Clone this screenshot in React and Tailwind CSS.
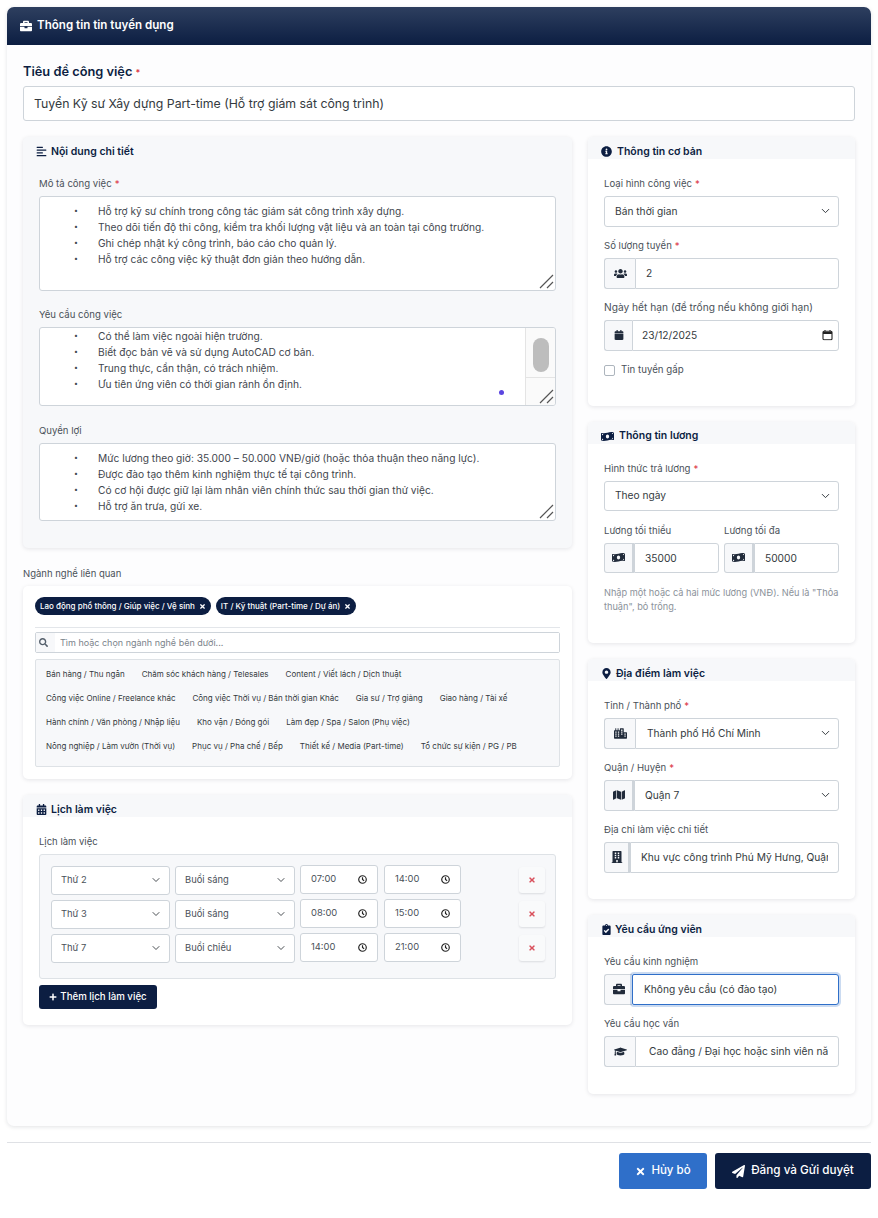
import React from 'react';
import {
  FaBriefcase, FaAlignLeft, FaInfoCircle, FaUsers, FaCalendar, FaCalendarAlt, FaMoneyBillWave,
  FaMapMarkerAlt, FaCity, FaMap, FaBuilding, FaClipboardCheck, FaGraduationCap, FaPaperPlane,
  FaTimes, FaPlus, FaSearch,
} from 'react-icons/fa';
import { ChevronDown } from 'lucide-react';

const BORDER = 'border border-[#ced4da]';

function Req() {
  return <span className="text-[#dc3545] ml-[3px]">*</span>;
}

function Label({ children, required, className = '' }) {
  return (
    <label className={`block h-[13px] leading-[13px] mb-[6px] text-[9.6px] text-[#4a5159] ${className}`}>
      {children}
      {required && <Req />}
    </label>
  );
}

function Chevron() {
  return <ChevronDown size={13} strokeWidth={1.8} className="absolute right-[7px] top-1/2 -translate-y-1/2 text-[#343a40] pointer-events-none" />;
}

function Select({ value, className = '' }) {
  return (
    <div className={`relative h-[30.5px] ${className}`}>
      <select
        defaultValue={value}
        className={`w-full h-full appearance-none bg-white rounded-[3px] ${BORDER} pl-[10px] pr-6 text-[10.2px] text-[#343a40] outline-none`}
      >
        <option>{value}</option>
      </select>
      <Chevron />
    </div>
  );
}

function Group({ icon: Icon, iconSize = 13, addon = 'w-[31px]', value, select, text = 'pl-[10px]', focus, heavy, trailing }) {
  return (
    <div className="flex h-[30.5px]">
      <span className={`${addon} shrink-0 flex items-center justify-center bg-[#f7f8fa] ${BORDER} ${heavy ? 'border-r-2' : 'border-r-0'} rounded-l-[3px] text-[#212b3b]`}>
        <Icon size={iconSize} />
      </span>
      <div className="relative flex-1 min-w-0">
        {select ? (
          <select defaultValue={value} className={`w-full h-full appearance-none bg-white rounded-r-[3px] ${BORDER} ${text} pr-6 text-[10.2px] text-[#343a40] outline-none`}>
            <option>{value}</option>
          </select>
        ) : (
          <input
            defaultValue={value}
            className={`w-full h-full bg-white rounded-r-[3px] border ${focus ? 'border-[#2f6fc9] shadow-[0_0_0_2px_rgba(47,111,201,0.25)] rounded-l-[2px]' : 'border-[#ced4da]'} ${text} pr-[10px] text-[10.2px] text-[#343a40] outline-none`}
          />
        )}
        {select && <Chevron />}
        {trailing}
      </div>
    </div>
  );
}

function Section({ icon: Icon, title, children, gray, className = '', iconSize = 11, gap = 'gap-[5px]' }) {
  return (
    <section className={`rounded-[5px] shadow-[0_1px_4px_rgba(15,23,42,0.1)] ${gray ? 'bg-[#f7f8fa]' : 'bg-white'} ${className}`}>
      <div className={`flex items-center ${gap} h-[22px] pl-[13px] pt-[7px] bg-[#f7f8fa] rounded-t-[5px] text-[10.5px] font-semibold text-[#0c1e42]`}>
        <Icon size={iconSize} />
        <span>{title}</span>
      </div>
      {children}
    </section>
  );
}

function Grip() {
  return (
    <svg className="absolute right-[1px] bottom-[1px]" width="15" height="15" viewBox="0 0 15 15" fill="none" stroke="#555" strokeWidth="1.2">
      <path d="M1 14 14 1M8 14l6-6" />
    </svg>
  );
}

function RichText({ lines, height, top = 'pt-[6px]', children }) {
  return (
    <div className={`relative ${height} bg-white rounded-[3px] ${BORDER} overflow-hidden`}>
      <ul className={`${top} text-[10.2px] leading-[16px] text-[#3f464e]`}>
        {lines.map((line) => (
          <li key={line} className="flex">
            <span className="w-[58px] shrink-0 text-right pr-[20px] text-[7px]">•</span>
            <span>{line}</span>
          </li>
        ))}
      </ul>
      {children}
      <Grip />
    </div>
  );
}

const describeLines = [
  'Hỗ trợ kỹ sư chính trong công tác giám sát công trình xây dựng.',
  'Theo dõi tiến độ thi công, kiểm tra khối lượng vật liệu và an toàn tại công trường.',
  'Ghi chép nhật ký công trình, báo cáo cho quản lý.',
  'Hỗ trợ các công việc kỹ thuật đơn giản theo hướng dẫn.',
];
const requireLines = [
  'Có thể làm việc ngoài hiện trường.',
  'Biết đọc bản vẽ và sử dụng AutoCAD cơ bản.',
  'Trung thực, cẩn thận, có trách nhiệm.',
  'Ưu tiên ứng viên có thời gian rảnh ổn định.',
];
const benefitLines = [
  'Mức lương theo giờ: 35.000 – 50.000 VNĐ/giờ (hoặc thỏa thuận theo năng lực).',
  'Được đào tạo thêm kinh nghiệm thực tế tại công trình.',
  'Có cơ hội được giữ lại làm nhân viên chính thức sau thời gian thử việc.',
  'Hỗ trợ ăn trưa, gửi xe.',
];
const categories = [
  ['Bán hàng / Thu ngân', 'Chăm sóc khách hàng / Telesales', 'Content / Viết lách / Dịch thuật'],
  ['Công việc Online / Freelance khác', 'Công việc Thời vụ / Bán thời gian Khác', 'Gia sư / Trợ giảng', 'Giao hàng / Tài xế'],
  ['Hành chính / Văn phòng / Nhập liệu', 'Kho vận / Đóng gói', 'Làm đẹp / Spa / Salon (Phụ việc)'],
  ['Nông nghiệp / Làm vườn (Thời vụ)', 'Phục vụ / Pha chế / Bếp', 'Thiết kế / Media (Part-time)', 'Tổ chức sự kiện / PG / PB'],
];
const schedule = [
  ['Thứ 2', 'Buổi sáng', '07:00', '14:00'],
  ['Thứ 3', 'Buổi sáng', '08:00', '15:00'],
  ['Thứ 7', 'Buổi chiều', '14:00', '21:00'],
];

function SmallSelect({ value, width }) {
  return (
    <div className={`relative h-full ${width}`}>
      <select defaultValue={value} className={`w-full h-full appearance-none bg-white rounded-[3px] ${BORDER} pl-[9px] text-[9.4px] text-[#4a5159] outline-none`}>
        <option>{value}</option>
      </select>
      <ChevronDown size={12} strokeWidth={1.8} className="absolute right-[8px] top-1/2 -translate-y-1/2 text-[#343a40] pointer-events-none" />
    </div>
  );
}

function TimeField({ value, width }) {
  return (
    <div className={`relative h-full ${width} bg-white rounded-[3px] ${BORDER} flex items-center pl-[10px] text-[9.4px] text-[#4a5159]`}>
      <span>{value}</span>
      <svg className="absolute right-[10px]" width="9" height="9" viewBox="0 0 10 10" fill="none" stroke="#222" strokeWidth="1.3">
        <circle cx="5" cy="5" r="4.2" />
        <path d="M5 2.5V5l1.8 1.4" />
      </svg>
    </div>
  );
}

function DateIcon() {
  return (
    <svg className="absolute right-[6px] top-1/2 -translate-y-1/2" width="11" height="11" viewBox="0 0 11 11" fill="none" stroke="#222" strokeWidth="1.1">
      <rect x="1" y="1.8" width="9" height="8.4" rx="1" />
      <path d="M1 3.6h9" strokeWidth="2" />
      <path d="M3 .5v1.5M8 .5v1.5" />
    </svg>
  );
}

export default function App() {
  return (
    <div className="bg-white w-[878px] h-[1218px] pt-[7px] px-[7px] font-['Inter',sans-serif]">
      <div className="h-[1119px] bg-[#fdfdfe] rounded-[7px] shadow-[0_1px_4px_rgba(15,23,42,0.12)]">
        <div className="flex items-center gap-[5px] h-[38px] pl-[13px] rounded-t-[7px] bg-gradient-to-b from-[#2e3f5f] to-[#0c1e42] text-white text-[11.6px] font-semibold">
          <FaBriefcase size={12} />
          <span>Thông tin tin tuyển dụng</span>
        </div>

        <div className="px-4 pt-[19px]">
          <label className="block h-[15px] leading-[15px] mb-[7px] text-[12.8px] font-semibold text-[#0c1e42]">
            Tiêu đề công việc<span className="text-[#dc3545] text-[9px] ml-[3px]">*</span>
          </label>
          <input
            defaultValue="Tuyển Kỹ sư Xây dựng Part-time (Hỗ trợ giám sát công trình)"
            className={`block w-full h-[35px] bg-white rounded-[3px] ${BORDER} pl-[10px] text-[12.3px] text-[#343a40] outline-none`}
          />

          <div className="grid grid-cols-[549px_267px] gap-4 mt-4">
            <div className="flex flex-col">
              <Section icon={FaAlignLeft} title="Nội dung chi tiết" gray className="h-[411px]" gap="gap-[4px]">
                <div className="px-4 pt-[18px]">
                  <Label required>Mô tả công việc</Label>
                  <RichText lines={describeLines} height="h-[95px]" />

                  <Label className="mt-[17px]">Yêu cầu công việc</Label>
                  <RichText lines={requireLines} height="h-[79px]" top="pt-0">
                    <div className="absolute right-0 top-0 bottom-0 w-[30px] bg-[#fafafa] border-l border-[#e4e4e4]">
                      <div className="mx-auto mt-[10px] w-[16px] h-[34px] rounded-full bg-[#bdbdbd]" />
                      <div className="mt-[5px] border-t border-[#e4e4e4]" />
                    </div>
                    <span className="absolute left-[459px] top-[62px] w-[5px] h-[5px] rounded-full bg-[#5b45e0]" />
                  </RichText>

                  <Label className="mt-[18px]">Quyền lợi</Label>
                  <RichText lines={benefitLines} height="h-[78px]" />
                </div>
              </Section>

              <Label className="mt-[19px] !mb-[6px] !text-[9.5px]">Ngành nghề liên quan</Label>
              <div className="h-[193px] bg-white rounded-[5px] shadow-[0_1px_4px_rgba(15,23,42,0.1)] px-3 pt-[11px]">
                <div className="flex gap-[5px]">
                  <span className="flex items-center gap-[4px] h-[18px] px-[5px] rounded-full bg-[#0c1e42] text-white text-[8px] font-medium">
                    Lao động phổ thông / Giúp việc / Vệ sinh <FaTimes size={7} />
                  </span>
                  <span className="flex items-center gap-[4px] h-[18px] px-[5px] rounded-full bg-[#0c1e42] text-white text-[8px] font-medium">
                    IT / Kỹ thuật (Part-time / Dự án) <FaTimes size={7} />
                  </span>
                </div>
                <div className="mt-[12px] border-t border-[#e3e6ea]" />
                <div className={`mt-[4px] flex h-[21px] rounded-[2px] ${BORDER}`}>
                  <span className="w-[19px] shrink-0 flex items-center pl-[3px] bg-[#f7f8fa] text-[#55606c]">
                    <FaSearch size={9} />
                  </span>
                  <input
                    placeholder="Tìm hoặc chọn ngành nghề bên dưới..."
                    className="flex-1 min-w-0 pl-[5px] text-[9px] bg-white placeholder:text-[#7b838b] outline-none"
                  />
                </div>
                <div className="mt-[6px] h-[108px] bg-[#f7f8fa] rounded-[2px] border border-[#dee2e6] pl-[10px] pt-[2px]">
                  {categories.map((row) => (
                    <div key={row[0]} className="flex gap-[17px] h-[24px] items-center text-[8px] text-[#343a40]">
                      {row.map((c) => <span key={c}>{c}</span>)}
                    </div>
                  ))}
                </div>
              </div>

              <Section icon={FaCalendarAlt} title="Lịch làm việc" className="mt-4 h-[230px]" gap="gap-[4px]">
                <div className="px-4 pt-[18px]">
                  <Label className="!text-[9.5px]">Lịch làm việc</Label>
                  <div className="h-[125px] bg-[#f7f8fa] rounded-[3px] border border-[#dee2e6] pl-[11px] pt-[10px] flex flex-col gap-[5px]">
                    {schedule.map(([day, shift, from, to]) => (
                      <div key={day} className="flex h-[29px] items-center">
                        <SmallSelect value={day} width="w-[119px]" />
                        <div className="w-[5px]" />
                        <SmallSelect value={shift} width="w-[120px]" />
                        <div className="w-[5px]" />
                        <TimeField value={from} width="w-[78px]" />
                        <div className="w-[6px]" />
                        <TimeField value={to} width="w-[77px]" />
                        <button className="ml-[58px] w-[26px] h-[26px] flex items-center justify-center bg-[#f9fafb] rounded-[3px] shadow-[0_1px_2px_rgba(15,23,42,0.12)] text-[#d9505c]">
                          <FaTimes size={8} />
                        </button>
                      </div>
                    ))}
                  </div>
                  <button className="mt-[6px] flex items-center justify-center gap-[3px] w-[118px] h-[24px] rounded-[3px] bg-[#0c1e42] text-white text-[9.7px] font-medium">
                    <FaPlus size={8} /> Thêm lịch làm việc
                  </button>
                </div>
              </Section>
            </div>

            <div className="flex flex-col gap-4">
              <Section icon={FaInfoCircle} title="Thông tin cơ bản" className="h-[268.5px]">
                <div className="px-4 pt-[18px] flex flex-col gap-[12.5px]">
                  <div>
                    <Label required>Loại hình công việc</Label>
                    <Select value="Bán thời gian" />
                  </div>
                  <div>
                    <Label required>Số lượng tuyển</Label>
                    <Group icon={FaUsers} value="2" />
                  </div>
                  <div>
                    <Label className="!text-[10.2px]">Ngày hết hạn (để trống nếu không giới hạn)</Label>
                    <Group icon={FaCalendar} iconSize={10} addon="w-[28px]" value="23/12/2025" text="pl-[9px]" trailing={<DateIcon />} />
                  </div>
                  <label className="flex items-center gap-[6px] text-[9.7px] text-[#4a5159]">
                    <input type="checkbox" className="appearance-none w-[11px] h-[11px] bg-white rounded-[2px] border border-[#adb5bd]" />
                    Tin tuyển gấp
                  </label>
                </div>
              </Section>

              <Section icon={FaMoneyBillWave} title="Thông tin lương" className="h-[221.5px]" iconSize={13}>
                <div className="px-4 pt-[18px] flex flex-col gap-[12.5px]">
                  <div>
                    <Label required>Hình thức trả lương</Label>
                    <Select value="Theo ngày" />
                  </div>
                  <div className="grid grid-cols-2 gap-[5px]">
                    <div>
                      <Label>Lương tối thiểu</Label>
                      <Group icon={FaMoneyBillWave} addon="w-[30px]" value="35000" heavy />
                    </div>
                    <div>
                      <Label>Lương tối đa</Label>
                      <Group icon={FaMoneyBillWave} addon="w-[30px]" value="50000" heavy />
                    </div>
                  </div>
                  <p className="text-[9.2px] leading-[14.5px] text-[#8b929a]">
                    Nhập một hoặc cả hai mức lương (VNĐ). Nếu là "Thỏa thuận", bỏ trống.
                  </p>
                </div>
              </Section>

              <Section icon={FaMapMarkerAlt} title="Địa điểm làm việc" className="h-[240px]" iconSize={11} gap="gap-[4px]">
                <div className="px-4 pt-[18px] flex flex-col gap-[12.5px]">
                  <div>
                    <Label required>Tỉnh / Thành phố</Label>
                    <Group icon={FaCity} value="Thành phố Hồ Chí Minh" select text="pl-[11px]" />
                  </div>
                  <div>
                    <Label required>Quận / Huyện</Label>
                    <Group icon={FaMap} iconSize={12} addon="w-[30px]" value="Quận 7" select heavy />
                  </div>
                  <div>
                    <Label>Địa chỉ làm việc chi tiết</Label>
                    <Group icon={FaBuilding} iconSize={12} addon="w-[26px]" value="Khu vực công trình Phú Mỹ Hưng, Quận 7" heavy />
                  </div>
                </div>
              </Section>

              <Section icon={FaClipboardCheck} title="Yêu cầu ứng viên" className="h-[179px]" iconSize={11} gap="gap-[3px]">
                <div className="px-4 pt-[18px] flex flex-col gap-[12.5px]">
                  <div>
                    <Label>Yêu cầu kinh nghiệm</Label>
                    <Group icon={FaBriefcase} iconSize={12} addon="w-[28px]" value="Không yêu cầu (có đào tạo)" focus text="pl-[11px]" />
                  </div>
                  <div>
                    <Label>Yêu cầu học vấn</Label>
                    <Group icon={FaGraduationCap} value="Cao đẳng / Đại học hoặc sinh viên năm cuối" text="pl-[13px]" />
                  </div>
                </div>
              </Section>
            </div>
          </div>
        </div>
      </div>

      <div className="mt-4 border-t border-[#dfe1e5] pt-[10px] flex justify-end gap-2">
        <button className="flex items-center justify-center gap-[5px] w-[88px] h-[36px] rounded-[3px] bg-[#2f6fc9] text-white text-[11.5px] font-medium">
          <FaTimes size={11} /> Hủy bỏ
        </button>
        <button className="flex items-center justify-center gap-[6px] w-[156px] h-[36px] rounded-[3px] bg-[#0c1e42] text-white text-[11.7px] font-medium">
          <FaPaperPlane size={13} /> Đăng và Gửi duyệt
        </button>
      </div>
    </div>
  );
}
